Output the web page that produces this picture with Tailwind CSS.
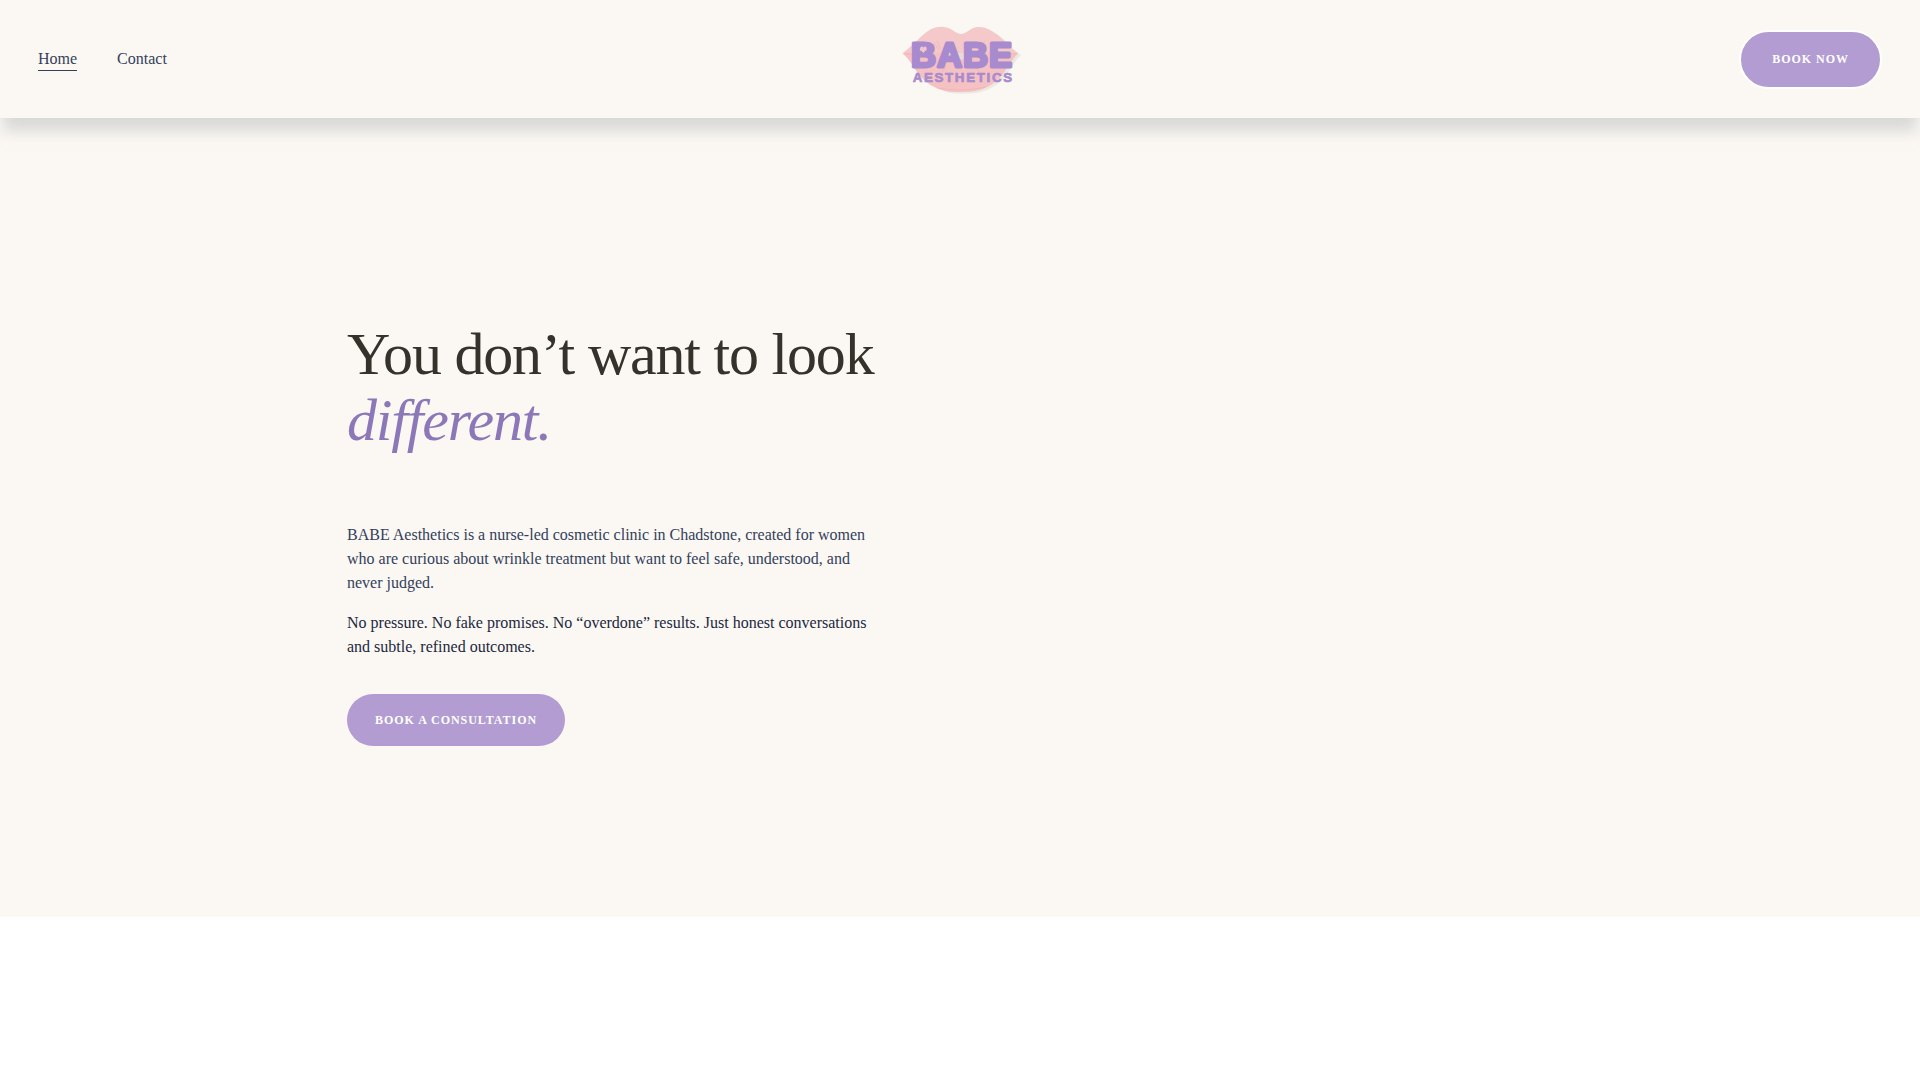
<!DOCTYPE html>
<html lang="en">
<head>
    <meta charset="UTF-8">
    <meta name="viewport" content="width=device-width, initial-scale=1.0">
    <title>BABE Aesthetics</title>
    <script src="https://cdn.jsdelivr.net/npm/@tailwindcss/browser@4"></script>
</head>
<body class="bg-white font-['Liberation_Serif',serif] text-[16px]">
    <header class="relative z-10 grid grid-cols-[1fr_auto_1fr] items-center bg-[#fbf8f3] px-[38px] py-[9px] shadow-[0_16px_14px_-3px_rgba(194,195,197,0.6)]">
        <nav class="flex gap-10 leading-[22px] text-[#33405c]">
            <a href="#" class="border-b border-[#33405c]">Home</a>
            <a href="#" class="border-b border-transparent">Contact</a>
        </nav>
        <a href="#" aria-label="BABE Aesthetics">
            <svg class="h-[100px] w-[140px]" viewBox="0 -3 420 300">
                <g fill="#000" opacity=".06" transform="translate(9 5)">
                    <path d="M38 130C60 112 80 92 98 76C120 56 140 48 162 51C184 53 198 72 213 72C228 72 242 53 262 51C285 49 302 60 322 74C344 92 362 115 384 130C372 142 362 158 348 178C326 216 292 236 254 243C226 247 194 247 168 243C128 234 96 212 76 178C64 158 52 142 38 130Z" />
                </g>
                <path fill="#f5c9c9" d="M38 130C60 112 80 92 98 76C120 56 140 48 162 51C184 53 198 72 213 72C228 72 242 53 262 51C285 49 302 60 322 74C344 92 362 115 384 130C372 142 362 158 348 178C326 216 292 236 254 243C226 247 194 247 168 243C128 234 96 212 76 178C64 158 52 142 38 130Z" />
                <path fill="#f5c1c3" d="M38 130C100 128 160 124 212 133C264 124 320 128 384 130C370 144 360 162 346 180C324 216 292 236 254 243C226 247 194 247 168 243C128 234 96 212 76 178C64 158 52 142 38 130Z" />
                <path fill="#eadbd6" d="M150 134Q212 124 274 134Q246 148 212 148Q178 148 150 134Z" />
                <path fill="none" stroke="#efb2b6" stroke-width="2" d="M44 130L70 134M380 130L352 134M140 92L152 116M132 98L148 122M284 92L272 116M168 168L158 186M256 168L268 186M140 234Q212 246 286 232" />
                <g fill="#a78bce" stroke="#a78bce" stroke-linejoin="round" font-family="'Liberation Sans', sans-serif" font-weight="700">
                    <text x="63" y="171" font-size="104" letter-spacing="3" stroke-width="9">BABE</text>
                    <text x="68" y="215" font-size="40" letter-spacing="5" stroke-width="2">AESTHETICS</text>
                </g>
                <path fill="#f3c6cb" d="M100 129L92 120Q88 113 93 110Q98 108 100 113Q103 108 108 110Q112 114 108 120Z" />
            </svg>
        </a>
        <a href="#" class="justify-self-end rounded-full border-2 border-white bg-[#b29cd1] px-[31px] py-[19px] text-[12px] leading-[17px] font-bold tracking-[0.08em] text-white">BOOK NOW</a>
    </header>

    <main class="bg-[#fbf8f3] px-6 pt-[203px] pb-[171px]">
        <div class="mx-auto max-w-[1226px]">
            <div class="max-w-[540px]">
                <h1 class="text-[60px] leading-[66px] tracking-[-0.02em] text-[#35312b]">
                    You don’t want to look
                    <em class="block text-[#8c78b8]">different.</em>
                </h1>
                <p class="mt-[70px] text-[#33405c]">BABE Aesthetics is a nurse-led cosmetic clinic in Chadstone, created for women who are curious about wrinkle treatment but want to feel safe, understood, and never judged.</p>
                <p class="mt-4 text-[#1c2740]">No pressure. No fake promises. No “overdone” results. Just honest conversations and subtle, refined outcomes.</p>
                <a href="#" class="mt-[35px] inline-block rounded-full bg-[#b29cd1] px-[28px] py-[18px] text-[12px] leading-4 font-bold tracking-[0.08em] text-white">BOOK A CONSULTATION</a>
            </div>
        </div>
    </main>
</body>
</html>
